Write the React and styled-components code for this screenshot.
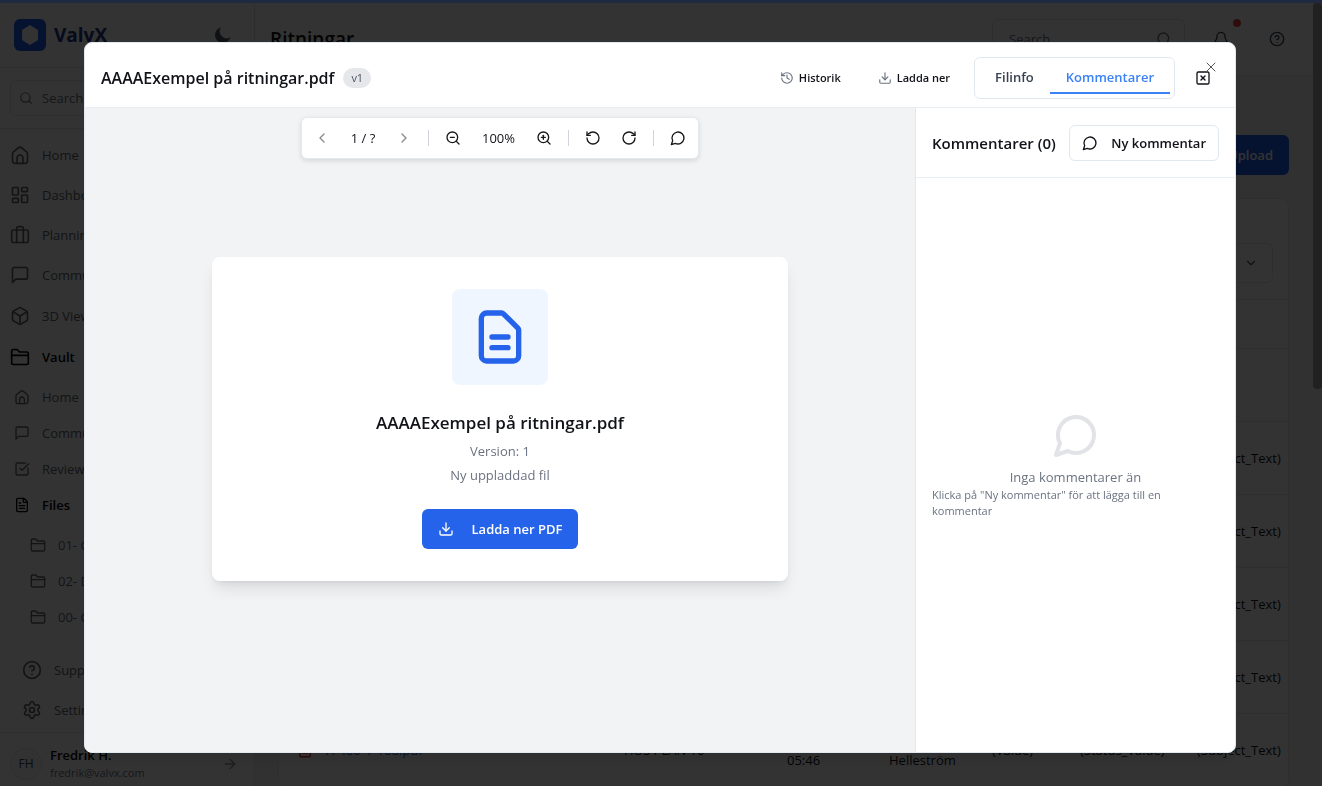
import React from "react";
import styled, { createGlobalStyle } from "styled-components";
import {
  ArrowRight, Bell, Box, ChevronDown, ChevronLeft, ChevronRight, Download, FileText, History,
  LayoutDashboard, RotateCcw, RotateCw, Search, Settings, SquareCheckBig, SquareX, X, ZoomIn, ZoomOut,
} from "lucide-react";

const Global = createGlobalStyle`
  *, *::before, *::after { box-sizing: border-box; }
  html, body { margin: 0; height: 100%; overflow: hidden; }
  body {
    font-family: "Open Sans", "Noto Sans", sans-serif;
    font-size: 13px;
    line-height: 20px;
    color: #111318;
    background: #fff;
  }
  button, input, select { font: inherit; color: inherit; }
  button { cursor: pointer; border: 0; padding: 0; background: none; }
  h1, h2, h3, p { margin: 0; }
  a { color: inherit; text-decoration: none; }
  svg { flex: none; display: block; }
`;

const Glyph = ({ size = 20, stroke = 2, children }) => (
  <svg width={size} height={size} viewBox="0 0 24 24" fill="none" stroke="currentColor"
    strokeWidth={stroke} strokeLinecap="round" strokeLinejoin="round" aria-hidden="true">{children}</svg>
);
const HomeIcon = (p) => (
  <Glyph {...p}><path d="M3 10.6a3 3 0 0 1 1.1-2.3l6-5a3 3 0 0 1 3.8 0l6 5a3 3 0 0 1 1.1 2.3V19a3 3 0 0 1-3 3H6a3 3 0 0 1-3-3z" /><path d="M8.500 22v-6.500a3.500 3.500 0 0 1 7 0V22" /></Glyph>
);
const CaseIcon = (p) => (
  <Glyph {...p}><rect x="2" y="6" width="20" height="15" rx="2" /><path d="M16 21V4a2 2 0 0 0-2-2h-4a2 2 0 0 0-2 2v17" /></Glyph>
);
const SquareMessage = (p) => (
  <Glyph {...p}><path d="M21 15a2 2 0 0 1-2 2H7l-4 4V5a2 2 0 0 1 2-2h14a2 2 0 0 1 2 2z" /></Glyph>
);
const FolderIcon = (p) => (
  <Glyph {...p}><path d="M2 5a2 2 0 0 1 2-2h4.500l3 3H20a2 2 0 0 1 2 2v11a2 2 0 0 1-2 2H4a2 2 0 0 1-2-2z" /><path d="M2 10h20" /></Glyph>
);
const HelpIcon = (p) => (
  <Glyph {...p}><circle cx="12" cy="12" r="10" /><path d="M9.090 9a3 3 0 0 1 5.830 1c0 2-3 3-3 3" /><path d="M12 17h.01" /></Glyph>
);
const RoundMessage = (p) => (
  <Glyph {...p}><path d="M7.900 20A9 9 0 1 0 4 16.100L2 22Z" /></Glyph>
);
const DocIcon = (p) => (
  <Glyph {...p}><path d="M9 12h6m-6 4h6m2 5H7a2 2 0 0 1-2-2V5a2 2 0 0 1 2-2h5.586a1 1 0 0 1 .707.293l5.414 5.414a1 1 0 0 1 .293.707V19a2 2 0 0 1-2 2z" /></Glyph>
);

/* ---------- application behind the dialog ---------- */
const Shell = styled.div`
  display: flex;
  height: 100vh;
  padding-top: 3px;
  overflow: hidden;
`;
const Sidebar = styled.aside`
  flex: none;
  width: 255px;
  display: flex;
  flex-direction: column;
  border-right: 1px solid #e5e7eb;
`;
const Brand = styled.div`
  display: flex;
  align-items: center;
  gap: 8px;
  height: 65px;
  padding: 0 22px 0 14px;
  border-bottom: 1px solid #e5e7eb;
`;
const LogoMark = styled.span`
  display: grid;
  place-items: center;
  width: 32px;
  height: 32px;
  border-radius: 6px;
  background: #1d5cf0;
  color: #fff;
`;
const BrandName = styled.strong`
  flex: 1;
  font-size: 19px;
  line-height: 28px;
  color: #1e3a8a;
`;
const SideSearch = styled.div`
  padding: 12px 10px;
  border-bottom: 1px solid #e5e7eb;
`;
const SearchBox = styled.label`
  display: flex;
  align-items: center;
  gap: 9px;
  height: 36px;
  padding: 0 8px;
  border: 1px solid #e5e7eb;
  border-radius: 6px;
  color: #6b7280;
  input { flex: 1; min-width: 0; border: 0; background: none; padding: 0; outline: 0; }
  input::placeholder { color: #6b7280; opacity: 1; }
`;
const Nav = styled.nav`
  flex: 1;
  padding-top: 6px;
`;
const NavItem = styled.a`
  display: flex;
  align-items: center;
  gap: 12px;
  height: ${(p) => p.$h || 40}px;
  padding-left: ${(p) => p.$indent || 10}px;
  color: ${(p) => (p.$active ? "#000" : "#60646c")};
  font-weight: ${(p) => (p.$active ? 600 : 400)};
`;
const SubNav = styled.div`
  padding: ${(p) => p.$pad || 2}px 0 0;
`;
const Support = styled.div`
  padding-bottom: 2px;
`;
const User = styled.div`
  display: flex;
  align-items: center;
  gap: 8px;
  height: 54px;
  padding: 8px 16px 0 10px;
  border-top: 1px solid #e5e7eb;
  color: #8b919b;
`;
const Avatar = styled.span`
  display: grid;
  place-items: center;
  width: 32px;
  height: 32px;
  border-radius: 50%;
  border: 1px solid #e5e7eb;
  background: #f8f8f9;
  color: #374151;
  font-size: 12px;
`;
const UserText = styled.div`
  flex: 1;
  line-height: 18px;
  font-size: 11px;
  color: #6b7280;
  strong { display: block; font-size: 13px; font-weight: 600; color: #000; }
`;
const Main = styled.main`
  flex: 1;
  min-width: 0;
  background: #f3f3f4;
`;
const TopBar = styled.header`
  display: flex;
  align-items: center;
  height: 73px;
  padding: 0 26px 0 15px;
  background: #fff;
  border-bottom: 1px solid #e5e7eb;
  h1 { flex: 1; font-size: 19px; line-height: 28px; font-weight: 600; }
`;
const TopSearch = styled(SearchBox)`
  width: 193px;
  height: 40px;
  padding: 0 12px 0 16px;
`;
const TopIcon = styled.button`
  position: relative;
  display: grid;
  place-items: center;
  width: 20px;
  height: 40px;
  margin-left: ${(p) => p.$gap}px;
  color: #374151;
`;
const Dot = styled.i`
  position: absolute;
  top: 0;
  right: -10px;
  width: 8px;
  height: 8px;
  border-radius: 50%;
  background: #ef4444;
`;
const Content = styled.div`
  padding: 59px 24px 0 23px;
`;
const Actions = styled.div`
  display: flex;
  justify-content: flex-end;
  margin-bottom: 23px;
`;
const Upload = styled.button`
  height: 40px;
  padding: 0 16px;
  border-radius: 6px;
  background: #1d5cf0;
  color: #fff;
  font-weight: 600;
`;
const TableCard = styled.section`
  background: #fff;
  border: 1px solid #e5e7eb;
  border-radius: 8px;
`;
const Filters = styled.div`
  display: flex;
  justify-content: flex-end;
  padding: 44px 15px 16px;
`;
const Picker = styled.div`
  display: flex;
  align-items: center;
  justify-content: flex-end;
  width: 180px;
  height: 40px;
  padding-right: 14px;
  border: 1px solid #e5e7eb;
  border-radius: 6px;
  color: #4b5563;
  select { flex: 1; height: 36px; border: 0; background: none; appearance: none; outline: 0; }
`;
const Files = styled.table`
  width: 100%;
  table-layout: fixed;
  border-collapse: collapse;
  th { height: 49px; padding: 0; border-top: 1px solid #e5e7eb; text-align: left; }
  td { height: 73px; padding: 0; border-top: 1px solid #e5e7eb; white-space: nowrap; }
`;
const FileLink = styled.a`
  display: flex;
  align-items: center;
  gap: 12px;
  padding-left: 17px;
  color: #2563eb;
  svg { color: #dc2626; }
`;
const ScrollTrack = styled.div`
  flex: none;
  width: 9px;
  background: #f3f3f4;
  &::before { content: ""; display: block; height: 386px; border-radius: 4px; background: #a5a5a5; }
`;

/* ---------- dialog ---------- */
const Overlay = styled.div`
  position: fixed;
  inset: 0;
  display: flex;
  justify-content: center;
  padding: 42px 2px 33px 0;
  background: rgba(0, 0, 0, 0.8);
`;
const LoadingBar = styled.div`
  position: fixed;
  top: 0;
  left: 0;
  right: 0;
  height: 3px;
  background: #1f2a40;
`;
const Dialog = styled.section`
  position: relative;
  display: flex;
  flex-direction: column;
  width: 100%;
  max-width: 1152px;
  overflow: hidden;
  border: 1px solid #e2e8f0;
  border-radius: 8px;
  background: #fff;
  box-shadow: 0 10px 15px -3px rgba(0, 0, 0, 0.1);
`;
const DialogHead = styled.header`
  display: flex;
  align-items: center;
  height: 65px;
  flex: none;
  padding: 6px 24px 0 16px;
  border-bottom: 1px solid #e9eef3;
`;
const Title = styled.h2`
  font-size: 16px;
  line-height: 28px;
  font-weight: 600;
`;
const Badge = styled.span`
  margin: 0 auto 0 9px;
  padding: 0 8px;
  border-radius: 10px;
  background: #e5e7eb;
  color: #4b5563;
  font-size: 11px;
`;
const HeadAction = styled.button`
  display: flex;
  align-items: center;
  gap: 5px;
  margin-right: ${(p) => p.$after}px;
  font-size: 11px;
  font-weight: 600;
  svg { color: #6b7280; }
`;
const Tabs = styled.div`
  display: flex;
  height: 42px;
  padding: 4px;
  border: 1px solid #e2e8f0;
  border-radius: 6px;
  margin-right: 20px;
`;
const Tab = styled.button`
  padding: 0 16px;
  font-weight: 600;
  color: ${(p) => (p.$active ? "#3b82f6" : "#374151")};
  border-bottom: 2px solid ${(p) => (p.$active ? "#3b82f6" : "transparent")};
`;
const Close = styled.button`
  position: absolute;
  top: 16px;
  right: 16px;
  color: #555;
`;
const Body = styled.div`
  flex: 1;
  display: flex;
  min-height: 0;
`;
const Viewer = styled.div`
  flex: 1;
  min-width: 0;
  display: flex;
  flex-direction: column;
  align-items: center;
  padding-top: 9px;
  background: #f2f3f5;
`;
const Toolbar = styled.div`
  display: flex;
  align-items: center;
  gap: 4px;
  height: 42px;
  padding: 3px 4px;
  border: 1px solid #e5e9ee;
  border-radius: 6px;
  background: #fff;
  box-shadow: 0 2px 5px rgba(0, 0, 0, 0.12);
`;
const Tool = styled.button`
  display: grid;
  place-items: center;
  width: 32px;
  height: 32px;
  color: #18181b;
  &:disabled { color: #8b8b8d; }
`;
const Readout = styled.span`
  width: ${(p) => p.$w}px;
  text-align: center;
`;
const Divider = styled.i`
  width: 1px;
  height: 16px;
  margin: 0 4px;
  background: #d1d5db;
`;
const Stage = styled.div`
  flex: 1;
  display: flex;
  align-items: center;
  width: 100%;
  justify-content: center;
  padding: 0 24px 74px;
`;
const FileCard = styled.article`
  display: flex;
  flex-direction: column;
  align-items: center;
  width: 100%;
  max-width: 576px;
  padding: 32px;
  border-radius: 8px;
  background: #fff;
  box-shadow: 0 10px 15px -3px rgba(0, 0, 0, 0.1), 0 4px 6px -4px rgba(0, 0, 0, 0.1);
  h3 { margin: 24px 0 4px; font-size: 17px; line-height: 28px; font-weight: 600; }
  p { margin-bottom: 4px; color: #6b7280; }
`;
const FileTile = styled.div`
  display: grid;
  place-items: center;
  width: 96px;
  height: 96px;
  border-radius: 8px;
  background: #eff6ff;
  color: #2563eb;
`;
const Primary = styled.button`
  display: flex;
  align-items: center;
  gap: 18px;
  height: 40px;
  margin-top: 20px;
  padding: 0 16px;
  border-radius: 6px;
  background: #2563eb;
  color: #fff;
  font-weight: 600;
`;
const Comments = styled.aside`
  flex: none;
  width: 320px;
  display: flex;
  flex-direction: column;
  border-left: 1px solid #e2e8f0;
`;
const CommentsHead = styled.div`
  display: flex;
  align-items: center;
  justify-content: space-between;
  height: 70px;
  padding: 0 16px;
  border-bottom: 1px solid #e9eef3;
  h3 { font-size: 15px; font-weight: 600; }
`;
const Outline = styled.button`
  display: flex;
  align-items: center;
  gap: 13px;
  height: 36px;
  padding: 0 12px;
  border: 1px solid #e2e8f0;
  border-radius: 6px;
  font-weight: 600;
`;
const Empty = styled.div`
  flex: 1;
  display: flex;
  flex-direction: column;
  align-items: center;
  justify-content: center;
  padding: 0 16px;
  color: #6b7280;
  svg { color: #e1e3e7; margin-bottom: 8px; }
  small { width: 100%; font-size: 11px; line-height: 16px; }
`;

const mainNav = [
  ["Home", HomeIcon, 40], ["Dashboard", LayoutDashboard, 40], ["Planning", CaseIcon, 40],
  ["Communication", SquareMessage, 40], ["3D Viewer", Box, 41], ["Vault", FolderIcon, 41],
];
const vaultNav = [
  ["Home", HomeIcon], ["Communication", SquareMessage], ["Review", SquareCheckBig], ["Files", FileText],
];
const folders = ["01- General", "02- Drawings", "00- General"];
const columns = [345, 163, 102, 103, 88, 117, 92];

function AppSidebar() {
  return (
    <Sidebar>
      <Brand>
        <LogoMark>
          <svg width="18" height="20" viewBox="0 0 18 20" fill="currentColor"><path d="M9 0l8 5v10l-8 5-8-5V5z" /></svg>
        </LogoMark>
        <BrandName>ValvX</BrandName>
        <svg width="18" height="18" viewBox="0 0 24 24" fill="#4b5563"><path d="M9 2a9.500 9.500 0 0 0 13 13A10.500 10.500 0 1 1 9 2z" /></svg>
      </Brand>
      <SideSearch>
        <SearchBox><Search size={14} /><input aria-label="Search menu" placeholder="Search" /></SearchBox>
      </SideSearch>
      <Nav>
        {mainNav.map(([label, Icon, h]) => (
          <NavItem href="#" key={label} $h={h} $active={label === "Vault"}><Icon size={20} />{label}</NavItem>
        ))}
        <SubNav>
          {vaultNav.map(([label, Icon]) => (
            <NavItem href="#" key={label} $h={36} $indent={14} $active={label === "Files"}><Icon size={16} />{label}</NavItem>
          ))}
        </SubNav>
        <SubNav $pad={4}>
          {folders.map((label) => (
            <NavItem href="#" key={label} $h={36} $indent={30}><FolderIcon size={16} />{label}</NavItem>
          ))}
        </SubNav>
      </Nav>
      <Support>
        <NavItem href="#" $indent={22}><HelpIcon />Support</NavItem>
        <NavItem href="#" $indent={22}><Settings size={20} />Settings</NavItem>
      </Support>
      <User>
        <Avatar>FH</Avatar>
        <UserText><strong>Fredrik H.</strong>fredrik@valvx.com</UserText>
        <ArrowRight size={16} />
      </User>
    </Sidebar>
  );
}

function FileTable() {
  return (
    <Files>
      <colgroup>{columns.map((w, i) => <col key={i} style={{ width: w }} />)}</colgroup>
      <thead><tr><th colSpan={7} aria-label="Files" /></tr></thead>
      <tbody>
        <tr><td colSpan={7} /></tr>
        {[104, 105, 106, 107, 108].map((n) => (
          <tr key={n}>
            <td><FileLink href="#"><DocIcon size={18} />A-400-1-{n}.pdf</FileLink></td>
            <td>HUS PLAN 10</td>
            <td>2025-01-14<br />05:46</td>
            <td>Fredrik<br />Helleström</td>
            <td>(Value)</td>
            <td>(Status_Value)</td>
            <td>(Subject_Text)</td>
          </tr>
        ))}
      </tbody>
    </Files>
  );
}

function FileDialog() {
  return (
    <Dialog role="dialog" aria-labelledby="file-title">
      <DialogHead>
        <Title id="file-title">AAAAExempel på ritningar.pdf</Title>
        <Badge>v1</Badge>
        <HeadAction $after={37}><History size={14} />Historik</HeadAction>
        <HeadAction $after={24}><Download size={14} />Ladda ner</HeadAction>
        <Tabs role="tablist">
          <Tab role="tab">Filinfo</Tab>
          <Tab role="tab" aria-selected="true" $active>Kommentarer</Tab>
        </Tabs>
        <button aria-label="Stäng panel"><SquareX size={16} /></button>
      </DialogHead>
      <Close aria-label="Stäng"><X size={16} strokeWidth={1.5} /></Close>
      <Body>
        <Viewer>
          <Toolbar>
            <Tool disabled aria-label="Föregående sida"><ChevronLeft size={16} /></Tool>
            <Readout $w={42}>1 / ?</Readout>
            <Tool disabled aria-label="Nästa sida"><ChevronRight size={16} /></Tool>
            <Divider />
            <Tool aria-label="Zooma ut"><ZoomOut size={16} /></Tool>
            <Readout $w={51}>100%</Readout>
            <Tool aria-label="Zooma in"><ZoomIn size={16} /></Tool>
            <Divider />
            <Tool aria-label="Rotera vänster"><RotateCcw size={16} /></Tool>
            <Tool aria-label="Rotera höger"><RotateCw size={16} /></Tool>
            <Divider />
            <Tool aria-label="Kommentera"><RoundMessage size={16} /></Tool>
          </Toolbar>
          <Stage>
            <FileCard>
              <FileTile><DocIcon size={64} /></FileTile>
              <h3>AAAAExempel på ritningar.pdf</h3>
              <p>Version: 1</p>
              <p>Ny uppladdad fil</p>
              <Primary><Download size={16} />Ladda ner PDF</Primary>
            </FileCard>
          </Stage>
        </Viewer>
        <Comments>
          <CommentsHead>
            <h3>Kommentarer (0)</h3>
            <Outline><RoundMessage size={16} />Ny kommentar</Outline>
          </CommentsHead>
          <Empty>
            <RoundMessage size={48} />
            <p>Inga kommentarer än</p>
            <small>Klicka på "Ny kommentar" för att lägga till en kommentar</small>
          </Empty>
        </Comments>
      </Body>
    </Dialog>
  );
}

export default function App() {
  return (
    <>
      <Global />
      <Shell>
        <AppSidebar />
        <Main>
          <TopBar>
            <h1>Ritningar</h1>
            <TopSearch><input aria-label="Search" placeholder="Search" /><Search size={16} /></TopSearch>
            <TopIcon $gap={26} aria-label="Notifications"><Bell size={16} /><Dot /></TopIcon>
            <TopIcon $gap={36} aria-label="Help"><HelpIcon size={16} /></TopIcon>
          </TopBar>
          <Content>
            <Actions><Upload>Upload</Upload></Actions>
            <TableCard>
              <Filters><Picker><select aria-label="Filter"><option /></select><ChevronDown size={14} /></Picker></Filters>
              <FileTable />
            </TableCard>
          </Content>
        </Main>
        <ScrollTrack />
      </Shell>
      <Overlay><FileDialog /></Overlay>
      <LoadingBar />
    </>
  );
}
